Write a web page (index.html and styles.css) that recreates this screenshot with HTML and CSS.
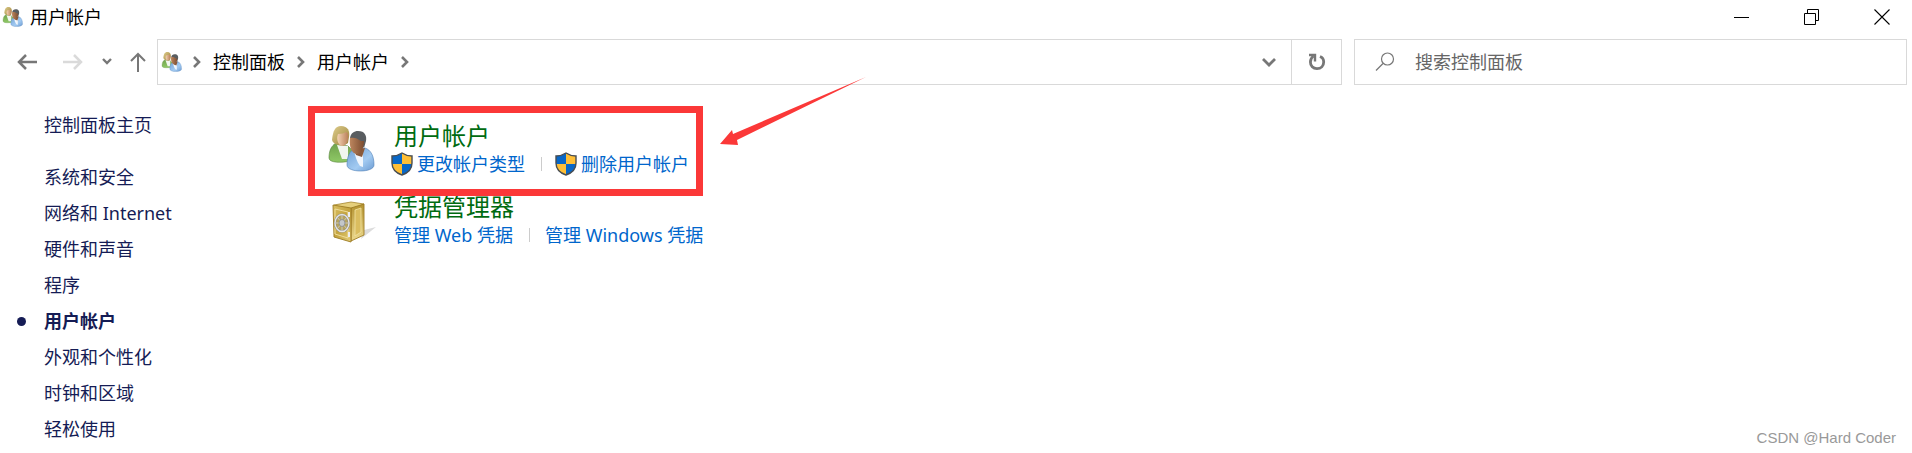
FILE: index.html
```html
<!DOCTYPE html>
<html lang="zh-CN">
<head>
<meta charset="utf-8">
<title>用户帐户</title>
<link rel="stylesheet" href="styles.css">
</head>
<body>
<svg class="defs" width="0" height="0" aria-hidden="true">
  <defs>
    <linearGradient id="skinA" x1="0" x2="1"><stop offset="0" stop-color="#f3d3b4"/><stop offset="1" stop-color="#b97f58"/></linearGradient>
    <linearGradient id="skinB" x1="0" x2="1"><stop offset="0" stop-color="#bd865e"/><stop offset="1" stop-color="#7b4c30"/></linearGradient>
    <linearGradient id="hairA" x1="0" y1="0" x2="1" y2="1"><stop offset="0" stop-color="#dfce8d"/><stop offset="1" stop-color="#9a8038"/></linearGradient>
    <linearGradient id="green" x1="0" y1="0" x2="0" y2="1"><stop offset="0" stop-color="#6fa14c"/><stop offset="1" stop-color="#8fc966"/></linearGradient>
    <linearGradient id="blue" x1="0" y1="0" x2="1" y2="1"><stop offset="0" stop-color="#6f9fd3"/><stop offset=".6" stop-color="#a3cbf2"/><stop offset="1" stop-color="#6c9bd2"/></linearGradient>
    <linearGradient id="goldA" x1="0" y1="0" x2="1" y2="1"><stop offset="0" stop-color="#d9bf63"/><stop offset=".5" stop-color="#c4a43f"/><stop offset="1" stop-color="#e3cc78"/></linearGradient>
    <linearGradient id="goldB" x1="0" y1="0" x2="0" y2="1"><stop offset="0" stop-color="#b3922f"/><stop offset="1" stop-color="#ecd98e"/></linearGradient>
    <symbol id="people" viewBox="0 0 48 46">
      <path d="M1 32C1 25 3 20 8 17l12 3 4 4-2 11C14 37 1 37 1 32z" fill="url(#green)" stroke="#55823a" stroke-width=".6"/>
      <path d="M9 19l5 14h6V20z" fill="#f1f6ee"/>
      <path d="M4 14C5 5 7 0 13 0c7 0 9 5 8 11l-1 6-5 3C10 19 5 18 4 14z" fill="url(#hairA)"/>
      <path d="M10 8c4 0 6-1 8-2 2 1 3 3 2 7-1 4-3 7-6 7-4-1-6-7-4-12z" fill="url(#skinA)"/>
      <path d="M19 39c0-9 3-14 7-16l11-1c6 2 9 8 9 17 0 8-27 8-27 0z" fill="url(#blue)" stroke="#507fb5" stroke-width=".6"/>
      <path d="M26 24l9 4 0 13-3-1c-3-4-5-10-6-16z" fill="#f1f6fc"/>
      <path d="M26 24l2 5 6 2 3-9z" fill="#8a5a3b"/>
      <path d="M22 12C23 7 26 5 30 5c7 0 9 5 8 10l-2 7-5-7z" fill="#595d60"/>
      <path d="M22 12c4-1 7 0 11 3h3c0 7-3 13-7 13-6 0-8-9-7-16z" fill="url(#skinB)"/>
    </symbol>
    <symbol id="safe" viewBox="0 0 44 42">
      <path d="M29 38l15-12-12 3z" fill="#dcdcdc"/>
      <path d="M2 4L19 1l13 2-10 5L2 6z" fill="#e5cf7b" stroke="#a5852d" stroke-width=".8"/>
      <path d="M19 7L32 3v31l-13 6z" fill="url(#goldB)" stroke="#9d7c22" stroke-width=".9"/>
      <path d="M23 9l6-2v24l-6 4z" fill="#dabd5f" stroke="#f2e3a2" stroke-width=".8"/>
      <path d="M1 4l18 3v34L2 36z" fill="url(#goldA)" stroke="#9d7c22" stroke-width=".9"/>
      <path d="M3 8l13 3v26L3 33z" fill="none" stroke="#f0dd98" stroke-width="1"/>
      <path d="M17 11v5M17 31v5" stroke="#eee" stroke-width="2"/>
      <ellipse cx="10" cy="22" rx="7" ry="8.500" fill="#b6a45e" stroke="#888" stroke-width="2.200"/>
      <ellipse cx="10" cy="22" rx="7" ry="8.500" fill="none" stroke="#e4e4e4" stroke-width="1.400"/>
      <path d="M10 14v16M3 22h14M5 16l10 12M15 16L5 28" stroke="#d0d0d0" stroke-width=".8"/>
      <ellipse cx="10" cy="22" rx="3" ry="3.500" fill="#c3c7ca" stroke="#888" stroke-width=".8"/>
    </symbol>
    <symbol id="shield" viewBox="0 0 22 24">
      <path d="M11 1C8 3 5 4 1 4v7c0 6 4 10 10 12 6-2 10-6 10-12V4c-4 0-7-1-10-3z" fill="#0867c7"/>
      <path d="M11 1c3 2 6 3 10 3v8H11zM1 12h10v11C5 21 1 17 1 12z" fill="#ffbf36"/>
      <path d="M11 1C8 3 5 4 1 4v7c0 6 4 10 10 12 6-2 10-6 10-12V4c-4 0-7-1-10-3z" fill="none" stroke="#484d52" stroke-width="1.400"/>
    </symbol>
    <symbol id="chevron" viewBox="0 0 8 12"><path d="M1 1l5 5-5 5" fill="none" stroke="#777" stroke-width="2.600"/></symbol>
  </defs>
</svg>

<header class="titlebar">
  <div class="caption"><svg class="people-small"><use href="#people"/></svg><span>用户帐户</span></div>
  <div class="window-controls">
    <button aria-label="最小化"><svg width="16" height="16"><path d="M0 8.500h15" stroke="#000"/></svg></button>
    <button aria-label="还原"><svg width="16" height="16"><path d="M.5 4.500h11v11H.5zM3.500 4V.5h11v11H12" fill="none" stroke="#000"/></svg></button>
    <button aria-label="关闭"><svg width="16" height="16"><path d="M.5.5l15 15M15.500.5l-15 15" stroke="#000" stroke-width="1.100"/></svg></button>
  </div>
</header>

<div class="toolbar">
  <nav class="history" aria-label="导航">
    <button aria-label="后退"><svg width="20" height="16"><path d="M20 8H2M9 1L2 8l7 7" fill="none" stroke="#777" stroke-width="2.500"/></svg></button>
    <button aria-label="前进"><svg width="20" height="16"><path d="M0 8h18M11 1l7 7-7 7" fill="none" stroke="#dadada" stroke-width="2.500"/></svg></button>
    <button class="narrow" aria-label="最近的位置"><svg width="10" height="8"><path d="M1 1l4 4 4-4" fill="none" stroke="#777" stroke-width="2.400"/></svg></button>
    <button class="narrow up" aria-label="上移"><svg width="16" height="20"><path d="M8 20V2M1 9l7-7 7 7" fill="none" stroke="#777" stroke-width="2"/></svg></button>
  </nav>
  <div class="address">
    <div class="crumbs">
      <svg class="people-small"><use href="#people"/></svg>
      <svg class="sep"><use href="#chevron"/></svg>
      <a href="#">控制面板</a>
      <svg class="sep"><use href="#chevron"/></svg>
      <a href="#">用户帐户</a>
      <svg class="sep"><use href="#chevron"/></svg>
    </div>
    <button class="drop" aria-label="以前的位置"><svg width="14" height="10"><path d="M1 2l6 6 6-6" fill="none" stroke="#777" stroke-width="2.800"/></svg></button>
    <button class="refresh" aria-label="刷新"><svg width="18" height="18"><path d="M12 3.500c2.500 1 3.700 3 3.700 5.500 0 4-2.700 6.700-6.700 6.700S2.400 13 2.400 9c0-2.500 1.100-4.500 3.100-6" fill="none" stroke="#777" stroke-width="2.800"/><path d="M1 2h6v6.500" fill="none" stroke="#777" stroke-width="2.400"/></svg></button>
  </div>
  <label class="search">
    <svg width="20" height="20"><circle cx="12.500" cy="7" r="6" fill="none" stroke="#777" stroke-width="1.200"/><path d="M8 11.500L1 18.500" stroke="#777" stroke-width="1.300"/></svg>
    <input type="text" placeholder="搜索控制面板" aria-label="搜索控制面板">
  </label>
</div>

<div class="content">
  <nav class="sidebar" aria-label="控制面板">
    <a class="home" href="#">控制面板主页</a>
    <a href="#">系统和安全</a>
    <a href="#">网络和 Internet</a>
    <a href="#">硬件和声音</a>
    <a href="#">程序</a>
    <a class="current" href="#" aria-current="page">用户帐户</a>
    <a href="#">外观和个性化</a>
    <a href="#">时钟和区域</a>
    <a href="#">轻松使用</a>
  </nav>
  <main class="categories">
    <section class="category highlighted">
      <svg class="category-icon"><use href="#people"/></svg>
      <div>
        <h2><a href="#">用户帐户</a></h2>
        <div class="tasks shielded">
          <a href="#"><svg class="shield"><use href="#shield"/></svg>更改帐户类型</a>
          <a href="#"><svg class="shield"><use href="#shield"/></svg>删除用户帐户</a>
        </div>
      </div>
      <svg class="arrow" viewBox="0 0 146 70" aria-hidden="true"><path d="M0 67l12-14 1 4L146 0 17 63l1 5z" fill="#fb3838"/></svg>
    </section>
    <section class="category credentials">
      <svg class="category-icon safe"><use href="#safe"/></svg>
      <div>
        <h2><a href="#">凭据管理器</a></h2>
        <div class="tasks">
          <a href="#">管理 Web 凭据</a>
          <a href="#">管理 Windows 凭据</a>
        </div>
      </div>
    </section>
  </main>
</div>
<footer class="watermark">CSDN @Hard Coder</footer>
</body>
</html>
```
FILE: styles.css
```css
* { box-sizing: border-box; }

body {
  margin: 0;
  min-height: 100vh;
  display: flex;
  flex-direction: column;
  position: relative;
  background: #fff;
  color: #000;
  font: 400 18px/24px "Noto Sans", "Noto Sans CJK SC", sans-serif;
}

a { color: inherit; text-decoration: none; }
button { border: 0; padding: 0; background: none; display: flex; align-items: center; justify-content: center; }
svg { display: block; flex: none; }
.defs { position: absolute; }

.titlebar { display: flex; justify-content: space-between; height: 33px; }
.caption { display: flex; align-items: center; gap: 6px; padding-left: 2px; }
.people-small { width: 22px; height: 20px; }
.window-controls { display: flex; }
.window-controls button { width: 70px; }
.window-controls button:last-child { width: 60px; margin-left: 5px; }

.toolbar { display: grid; grid-template-columns: 157px 1185fr 565fr; height: 46px; margin: 6px 5px 0 0; }
.history { display: flex; align-items: center; padding-left: 4px; }
.history button { width: 46px; }
.history .narrow { width: 22px; }
.history .up { margin-left: 9px; }

.address { display: flex; border: 1px solid #d9d9d9; }
.crumbs { flex: 1; display: flex; align-items: center; gap: 12px; padding-left: 3px; }
.crumbs .people-small { margin-right: -2px; }
.sep { width: 8px; height: 12px; }
.drop { width: 44px; }
.refresh { width: 50px; border-left: 1px solid #d9d9d9; }

.search { display: flex; align-items: center; gap: 20px; margin-left: 12px; padding-left: 20px; border: 1px solid #d9d9d9; }
.search input { flex: 1; min-width: 0; border: 0; padding: 0; outline: 0; background: none; font: inherit; color: #666; }
.search input::placeholder { color: #666; opacity: 1; }

.content { display: flex; }
.sidebar { width: 308px; padding: 22px 0 0 44px; display: flex; flex-direction: column; align-items: flex-start; color: #151c55; line-height: 36px; }
.sidebar .home { margin-bottom: 16px; }
.sidebar .current { display: flex; align-items: center; font-weight: 700; }
.sidebar .current::before { content: ""; width: 9px; height: 9px; margin: 0 18px 0 -27px; border-radius: 50%; background: #151c55; }

.categories { flex: 1; padding-top: 21px; }
.category { display: flex; gap: 18px; padding-left: 20px; }
.category-icon { width: 48px; height: 46px; margin-top: 20px; }
.category-icon.safe { width: 44px; height: 42px; margin: 9px 0 0 4px; }
.highlighted { position: relative; width: 395px; height: 90px; }
.highlighted > div { padding-top: 15px; }
.highlighted::after { content: ""; position: absolute; inset: 0; border: 7px solid #fb3838; pointer-events: none; }
.credentials { margin-top: -4px; }
.arrow { position: absolute; left: 412px; top: -29px; width: 146px; height: 70px; }
h2 { margin: 0; font-size: 24px; line-height: 29px; font-weight: 400; color: #006b10; white-space: nowrap; }
.tasks { display: flex; color: #0066cc; line-height: 28px; white-space: nowrap; }
.tasks a { display: flex; align-items: center; gap: 4px; }
.tasks a + a::before { content: ""; width: 1px; height: 14px; margin: 0 11px 0 16px; background: #ccc; }
.tasks.shielded { margin-left: -3px; }
.tasks.shielded a + a::before { margin-right: 9px; }
.shield { width: 22px; height: 24px; }

.watermark { position: absolute; right: 16px; bottom: 5px; font: 15px/20px "Liberation Sans", sans-serif; color: #999; }
```
